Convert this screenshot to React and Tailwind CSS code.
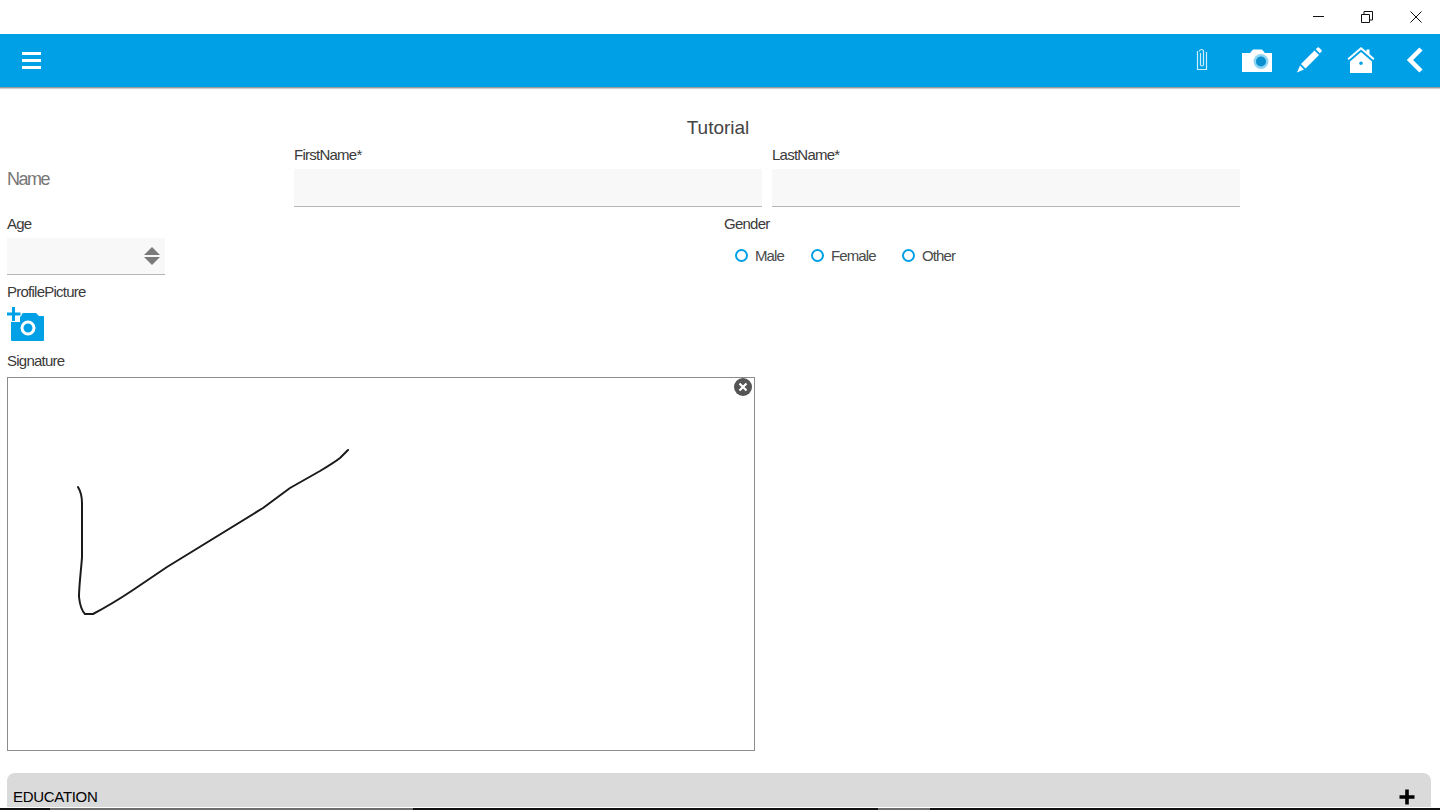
import React from 'react';

const font = { fontFamily: '"Liberation Sans", Arial, sans-serif' };

const Label = ({ children, className = '' }) => (
  <div className={`text-[15px] leading-[18px] tracking-[-0.75px] text-[#3a3a3a] ${className}`}>{children}</div>
);

const Field = ({ label }) => (
  <div className="w-[468px]">
    <Label className="h-[25px] pt-[2px]">{label}</Label>
    <div className="h-[38px] bg-[#f8f8f8] border-b border-[#b5b5b5]" />
  </div>
);

const Radio = ({ label, className }) => (
  <div className={`flex items-center ${className}`}>
    <span className="w-[13px] h-[13px] mt-[-2px] rounded-full border-2 border-[#00a0e6]" />
    <span className="ml-[7px] mt-[-2px] text-[15px] leading-[18px] tracking-[-0.9px] text-[#4a4a4a]">{label}</span>
  </div>
);

function TopIcons() {
  return (
    <div className="flex items-center mb-[2px]">
      {/* paperclip */}
      <svg width="12" height="24" viewBox="0 0 12 24" className="mr-[34px]" fill="none" stroke="#cdeefc" strokeWidth="1.2">
        <path d="M1.5 3v18.5h9V4" />
        <path d="M3.5 3.5a2 2 0 0 1 4 0v13a1.5 1.5 0 0 1-3 0V5" />
      </svg>
      {/* camera */}
      <svg width="30" height="24" viewBox="0 0 30 24" className="mr-[24px]">
        <path fill="#fff" d="M0 5h8l3-3.5h9L23 5h7v19H0z" />
        <circle cx="19" cy="13.500" r="7.500" fill="#8fd6f5" />
        <circle cx="19" cy="13.500" r="5" fill="#0a8fd0" />
      </svg>
      {/* pencil */}
      <svg width="26" height="26" viewBox="0 0 26 26" className="mr-[25px]" fill="#fff">
        <path d="M5 17 18.500 3.500l4.500 4.500L9.500 21.500z" />
        <path d="M19.800 2.200 21.500.5a1 1 0 0 1 1.400 0l2.600 2.600a1 1 0 0 1 0 1.400l-1.700 1.700z" />
        <path d="M4 18.500 8 22.500 1 25.500z" />
      </svg>
      {/* home */}
      <svg width="28" height="28" viewBox="0 0 28 28" className="mr-[31px]" fill="#fff">
        <path d="M14 1 19.500 5.500V3.500h3V8l5 4.500-1.300 1.500L14 3.500 1.800 14 .5 12.500z" />
        <path fillRule="evenodd" d="M14 6 25 15.500V27H3V15.500zM14 15.500a1.800 1.800 0 1 0 0 3.600 1.800 1.800 0 0 0 0-3.600z" />
      </svg>
      {/* back */}
      <svg width="17" height="26" viewBox="0 0 17 26" fill="none" stroke="#fff" strokeWidth="4.500">
        <path d="M15 2 4 13l11 11" />
      </svg>
    </div>
  );
}

export default function App() {
  return (
    <div className="h-screen flex flex-col overflow-hidden bg-white" style={font}>
      {/* window title bar */}
      <div className="h-[34px] shrink-0 flex items-center justify-end">
        <svg width="12" height="2" viewBox="0 0 12 2" className="mr-[36px]">
          <path d="M0 .5h11" stroke="#111" strokeWidth="1" />
        </svg>
        <svg width="12" height="12" viewBox="0 0 12 12" className="mr-[37px]" fill="none" stroke="#111">
          <path d="M.5 3.500h8v8h-8z" />
          <path d="M3 3V.5h8.500V9H9" />
        </svg>
        <svg width="12" height="12" viewBox="0 0 12 12" className="mr-[18px]" fill="none" stroke="#111">
          <path d="M.5.5l11 11M11.500.5l-11 11" />
        </svg>
      </div>

      {/* app header */}
      <div className="h-[54px] shrink-0 flex items-center justify-between pl-[22px] pr-[17px] bg-[#00a0e6] border-b border-[#9a9a9a] shadow-[0_1px_1px_#d0d0d0]">
        <div className="flex flex-col gap-[4px]">
          <span className="block w-[19px] h-[3px] bg-white" />
          <span className="block w-[19px] h-[3px] bg-white" />
          <span className="block w-[19px] h-[3px] bg-white" />
        </div>
        <TopIcons />
      </div>

      {/* form */}
      <div className="flex-1 min-h-0 px-[7px] pt-[29px] pb-[1px] flex flex-col">
        <div className="text-[19px] leading-[22px] text-[#444444] text-center pr-[4px]">Tutorial</div>
        <div className="flex items-end mt-[5px]">
          <div className="w-[287px] h-[38px] text-[18px] leading-[20px] tracking-[-1.5px] text-[#777777]">Name</div>
          <div className="flex gap-[10px]">
            <Field label="FirstName*" />
            <Field label="LastName*" />
          </div>
        </div>

        <div className="flex mt-[8px]">
          <div className="w-[717px]">
            <Label className="h-[23px]">Age</Label>
            <div className="w-[158px] h-[37px] bg-[#f8f8f8] border-b border-[#b5b5b5] flex items-center justify-end pr-[5px]">
              <svg width="16" height="20" viewBox="0 0 16 20" fill="#7a7a7a">
                <path d="M8 1 16 9H0zM0 11h16l-8 8z" />
              </svg>
            </div>
          </div>
          <div>
            <Label className="h-[23px]">Gender</Label>
            <div className="flex h-[37px] items-center pl-[11px]">
              <Radio label="Male" className="w-[76px]" />
              <Radio label="Female" className="w-[91px]" />
              <Radio label="Other" />
            </div>
          </div>
        </div>

        <Label className="mt-[8px]">ProfilePicture</Label>
        <svg width="37" height="35" viewBox="0 0 37 35" fill="#00a0e6" className="mt-[6px] block">
          <path fillRule="evenodd" d="M4 15h9V9l3-3h13l3 3h4a1 1 0 0 1 1 1v23a1 1 0 0 1-1 1H5a1 1 0 0 1-1-1zM21 13.500a7.500 7.500 0 1 0 0 15 7.500 7.500 0 0 0 0-15zM21 16.500a4.500 4.500 0 1 1 0 9 4.500 4.500 0 0 1 0-9z" />
          <path stroke="#fff" strokeWidth="2" strokeLinejoin="round" d="M5 0h3v5.500h5.500v3H8V14H5V8.500H0v-3h5z" paintOrder="stroke" />
        </svg>

        <Label className="mt-[10px] h-[25px]">Signature</Label>
        <div className="relative w-[748px] h-[374px] shrink-0 border border-[#8c8c8c]">
          <svg viewBox="8 378 746 372" className="block w-full h-full" fill="none" stroke="#1a1a1a" strokeWidth="2" strokeLinecap="round" strokeLinejoin="round">
            <path d="M78 487 C81 492 82 497 82 503 L82 557 C81 572 79 585 79 597 C80 606 82 611 85 614 L93 614 Q112 604 133 590 L167 567 L263 508 L290 488 L320 471 Q335 462 340 458 L348 450" />
          </svg>
          <svg width="20" height="20" viewBox="0 0 20 20" className="absolute top-[-1px] right-[1px]">
            <circle cx="10" cy="10" r="9" fill="#555555" />
            <path d="M6.500 6.500l7 7M13.500 6.500l-7 7" stroke="#fff" strokeWidth="2.200" />
          </svg>
        </div>

        <div className="mt-[22px] mr-[2px] flex-1 min-h-[33px] bg-[#dadada] rounded-t-[8px] flex items-end justify-between pl-[6px] pr-[16px]">
          <span className="text-[15px] leading-[18px] tracking-[-0.3px] text-black mb-[1px]">EDUCATION</span>
          <svg width="16" height="16" viewBox="0 0 16 16" className="mb-[2px]">
            <path d="M8 0.500v15M0.500 8h15" stroke="#000" strokeWidth="3.600" />
          </svg>
        </div>
      </div>

      {/* bottom edge of the window */}
      <div className="h-[2px] shrink-0 flex">
        <div className="w-[50px] bg-[#111111]" />
        <div className="w-[363px] bg-[#6e6e6e]" />
        <div className="w-[465px] bg-[#111111]" />
        <div className="w-[52px] bg-[#6e6e6e]" />
        <div className="flex-1 bg-[#111111]" />
      </div>
    </div>
  );
}
